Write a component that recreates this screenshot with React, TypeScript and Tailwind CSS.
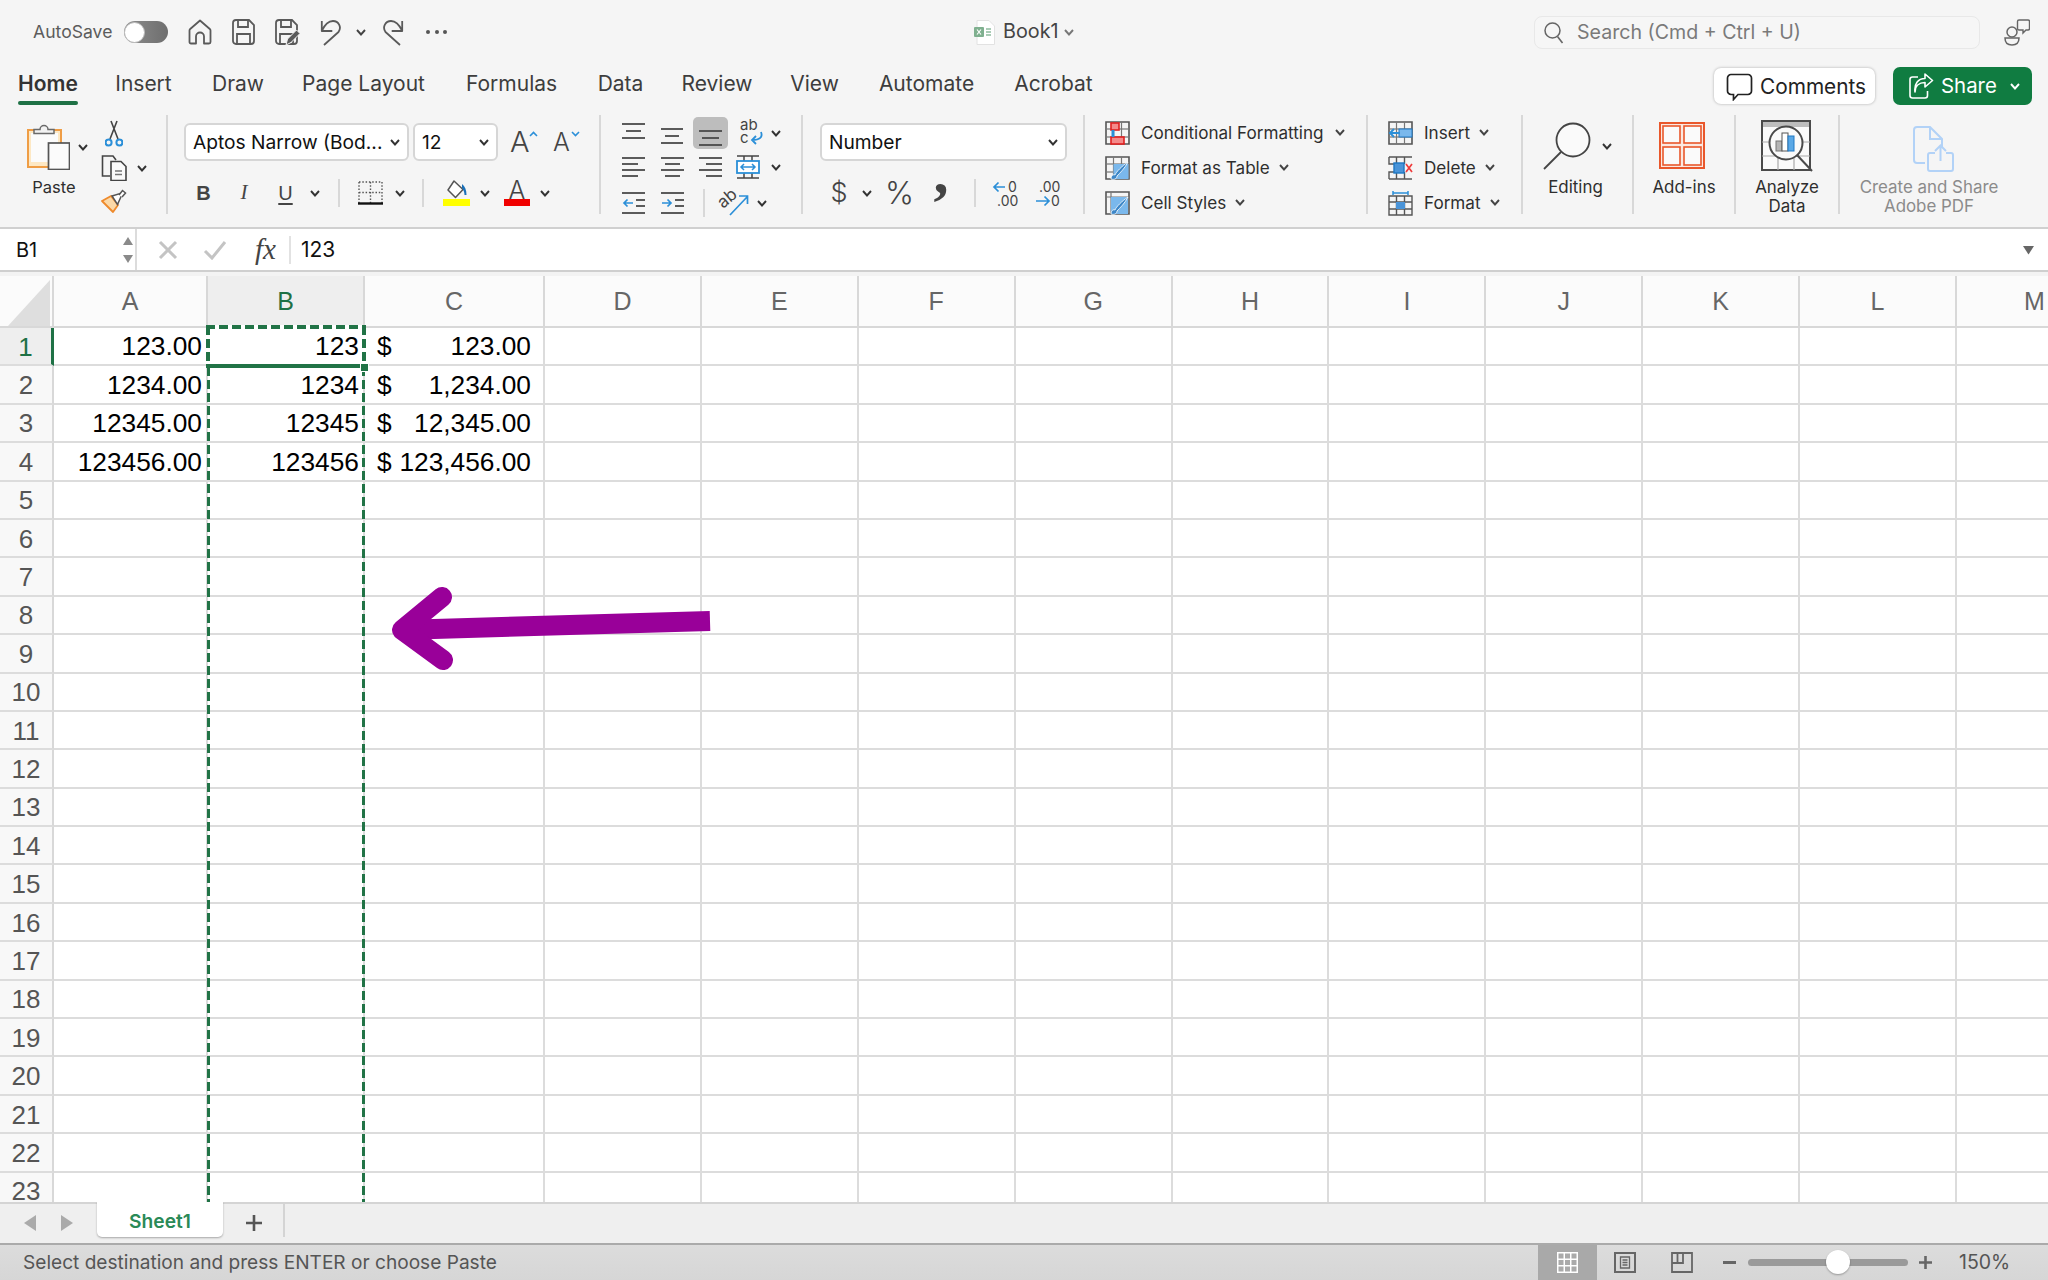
import React from "react";

const D = "#4a4a4a";
const BL = "#2b8fd8";

function Chev({ c = "#444", w = 10 }: { c?: string; w?: number }) {
  return (
    <svg width={w} height={7} viewBox="0 0 10 7" className="shrink-0">
      <path d="M1 1l4 4.5L9 1" fill="none" stroke={c} strokeWidth={1.9} />
    </svg>
  );
}

function Lines({ w = 23, rows, h = 24, extra }: { w?: number; h?: number; rows: [number, number, number][]; extra?: React.ReactNode }) {
  return (
    <svg width={w} height={h} viewBox={`0 0 ${w} ${h}`} className="shrink-0">
      {rows.map((r, i) => (
        <line key={i} x1={r[0]} x2={r[1]} y1={r[2]} y2={r[2]} stroke={D} strokeWidth={1.8} />
      ))}
      {extra}
    </svg>
  );
}

function Home() {
  return (
    <svg width={24} height={26} viewBox="0 0 24 26" className="shrink-0">
      <path d="M3 24.500a1.500 1.500 0 0 1-1.500-1.500V11.500a2 2 0 0 1 .7-1.500L12 1.500 21.800 10a2 2 0 0 1 .7 1.500V23a1.500 1.500 0 0 1-1.500 1.500h-5v-7a4 4 0 0 0-8 0v7z" fill="none" stroke="#5a5a5a" strokeWidth={1.8} strokeLinejoin="round" />
    </svg>
  );
}
function Save({ pen }: { pen?: boolean }) {
  return (
    <svg width={25} height={26} viewBox="0 0 25 26" className="shrink-0">
      <path d="M4 1h13l5 5v16a3 3 0 0 1-3 3H4a3 3 0 0 1-3-3V4a3 3 0 0 1 3-3z" fill="none" stroke="#5a5a5a" strokeWidth={1.8} />
      <path d="M6 1v7h10V1M5 25V15h13v10" fill="none" stroke="#5a5a5a" strokeWidth={1.8} />
      {pen && <path d="M11 26l1.500-6 9-9 3.500 3.500-9 9z" fill="#5a5a5a" stroke="#f5f5f5" strokeWidth={1} />}
    </svg>
  );
}
function Undo({ flip }: { flip?: boolean }) {
  return (
    <svg width={22} height={27} viewBox="0 0 22 27" className={`shrink-0 ${flip ? "-scale-x-100" : ""}`}>
      <path d="M1.800 2v10h10.500M1.800 12C5 5 9 2 13 2c5.500 0 9 6 5.500 11L4 26" fill="none" stroke="#5a5a5a" strokeWidth={1.8} strokeLinejoin="round" />
    </svg>
  );
}
function Scissors() {
  return (
    <svg width={18} height={27} viewBox="0 0 18 27" className="shrink-0">
      <path d="M12 1L5 19M6 1l7 18" stroke="#444" strokeWidth={1.6} fill="none" />
      <circle cx={3.6} cy={22.5} r={3} fill="none" stroke={BL} strokeWidth={2} />
      <circle cx={14.4} cy={22.5} r={3} fill="none" stroke={BL} strokeWidth={2} />
    </svg>
  );
}
function Copy() {
  return (
    <svg width={26} height={26} viewBox="0 0 26 26" className="shrink-0">
      <path d="M9 21H1.500V1H12l3 4" fill="none" stroke="#444" strokeWidth={1.6} />
      <path d="M10 6.500h10l5 5v14H10z" fill="#fafafa" stroke="#444" strokeWidth={1.6} />
      <path d="M14 16h7M14 19.500h7" stroke="#777" strokeWidth={1.4} />
    </svg>
  );
}
function Painter() {
  return (
    <svg width={26} height={24} viewBox="0 0 26 24" className="shrink-0">
      <path d="M1 12l9-5 7 9-5 7z" fill="#fbd9a8" stroke="#ee8a2c" strokeWidth={1.8} strokeLinejoin="round" />
      <path d="M11 7l8-2.500 1.500 2-4 9z" fill="#fff" stroke="#555" strokeWidth={1.5} />
      <path d="M18 6l3.500-4.500 3 2.500L21 8" fill="#fff" stroke="#555" strokeWidth={1.5} />
    </svg>
  );
}
function Paste() {
  return (
    <svg width={43} height={47} viewBox="0 0 43 47" className="shrink-0">
      <rect x={1} y={7} width={33} height={37} fill="#fde8c4" stroke="#ef9d45" strokeWidth={2} />
      <rect x={4} y={10} width={27} height={29} fill="#fbfbfb" />
      <path d="M7 10.500V6.500h6a4 4 0 0 1 8 0h6v4z" fill="#f2f2f2" stroke="#6a6a6a" strokeWidth={1.5} />
      <rect x={21.500} y={20} width={21} height={26.500} fill="#fbfbfb" stroke="#555" strokeWidth={1.7} />
    </svg>
  );
}
function Borders() {
  return (
    <svg width={25} height={24} viewBox="0 0 25 24" className="shrink-0">
      <path d="M1 1h23M1 1v21M24 1v21M12.500 1v21M1 11.500h23" stroke="#555" strokeWidth={1.4} strokeDasharray="1.500 1.800" fill="none" />
      <path d="M0 22.500h25" stroke="#111" strokeWidth={2.4} />
    </svg>
  );
}
function Fill() {
  return (
    <svg width={27} height={26} viewBox="0 0 27 26" className="shrink-0">
      <path d="M11 1l9 8.500-7.500 8L5 10z" fill="#fff" stroke="#555" strokeWidth={1.5} strokeLinejoin="round" />
      <path d="M19 4c3 2.500 4.500 6 4.500 11h-2c0-3-1-5-2.500-7z" fill="#1a70b8" />
      <rect x={0} y={19} width={27} height={7} fill="#ffff00" />
    </svg>
  );
}
function GridBase({ children, v = [8.500, 16.500], hl = [8, 16] }: { children?: React.ReactNode; v?: number[]; hl?: number[] }) {
  return (
    <svg width={25} height={24} viewBox="0 0 25 24" className="shrink-0">
      <path d={`M1 1h23v22H1z`} fill="none" stroke="#555" strokeWidth={1.6} />
      {v.map((x) => <line key={x} x1={x} x2={x} y1={1} y2={23} stroke="#777" strokeWidth={1.2} />)}
      {hl.map((y) => <line key={y} x1={1} x2={24} y1={y} y2={y} stroke="#777" strokeWidth={1.2} />)}
      {children}
    </svg>
  );
}
function Brush() {
  return <path d="M6 23c0-3 2-5 4-4 1-3 7-9 13-13-3 6-8 11-11 14 0 3-3 4-6 3z" fill="#3d87c8" stroke="#fff" strokeWidth={0.8} />;
}

function Label({ children, w, cls = "" }: { children: React.ReactNode; w: string; cls?: string }) {
  return <span className={`${w} ${cls} text-[17.1px] leading-[24px] whitespace-nowrap text-[#2e2e2e]`}>{children}</span>;
}

function TitleBar() {
  return (
    <div className="flex items-center h-[56px] pt-[8px]">
      <span className="ml-[33px] w-[81px] text-[17.6px] whitespace-nowrap text-[#5c5c5c]">AutoSave</span>
      <div className="ml-[10px] w-[44px] h-[22px] rounded-full bg-gradient-to-r from-[#8e8e8e] to-[#6e6e6e] flex items-center shrink-0">
        <div className="w-[21px] h-[21px] rounded-full bg-white border border-[#bbb]" />
      </div>
      <div className="ml-[20px] flex"><Home /></div>
      <div className="ml-[20px] flex"><Save /></div>
      <div className="ml-[18px] flex"><Save pen /></div>
      <div className="ml-[20px] flex"><Undo /></div>
      <div className="ml-[14px] flex"><Chev /></div>
      <div className="ml-[16px] flex"><Undo flip /></div>
      <div className="ml-[22px] w-[21px] flex justify-between">
        <i className="w-[4px] h-[4px] rounded-full bg-[#555]" />
        <i className="w-[4px] h-[4px] rounded-full bg-[#555]" />
        <i className="w-[4px] h-[4px] rounded-full bg-[#555]" />
      </div>
      <svg width={21} height={25} viewBox="0 0 21 25" className="ml-[527px] shrink-0">
        <path d="M3 .5h12l5.500 5.500v18.500H3z" fill="#fff" stroke="#e2e2e2" />
        <rect x={0} y={7} width={10} height={10} rx={1} fill="#7fb08f" />
        <path d="M3 9.500l4 5M7 9.500l-4 5" stroke="#fff" strokeWidth={1.2} />
        <path d="M12 9h5M12 12h5M12 15h5" stroke="#8fbc9f" strokeWidth={1.6} />
      </svg>
      <span className="ml-[8px] w-[55px] text-[19.8px] whitespace-nowrap text-[#444]">Book1</span>
      <div className="ml-[5px] flex"><Chev c="#777" w={12} /></div>
      <div className="ml-[459px] w-[446px] h-[33px] pt-[1px] rounded-[8px] border border-[#e8e8e8] bg-[#f6f6f6] flex items-center shrink-0">
        <svg width={20} height={22} viewBox="0 0 20 22" className="ml-[9px] shrink-0">
          <circle cx={8.500} cy={8.500} r={7.500} fill="none" stroke="#666" strokeWidth={1.5} />
          <path d="M13.500 14.500l5 6.500" stroke="#666" strokeWidth={1.6} />
        </svg>
        <span className="ml-[13px] text-[19.6px] whitespace-nowrap text-[#7a7a7a]">Search (Cmd + Ctrl + U)</span>
      </div>
      <svg width={26} height={27} viewBox="0 0 26 27" className="ml-[24px] shrink-0">
        <circle cx={8} cy={13} r={5} fill="none" stroke="#666" strokeWidth={1.5} />
        <path d="M1 19h14c0 5-3 7-7 7s-7-2-7-7z" fill="none" stroke="#666" strokeWidth={1.5} />
        <path d="M15 1h9a1.500 1.500 0 0 1 1.500 1.500v7a1.500 1.500 0 0 1-1.500 1.500h-2l-3 3v-3h-4a1.500 1.500 0 0 1-1.500-1.500v-7A1.500 1.500 0 0 1 15 1z" fill="#f5f5f5" stroke="#666" strokeWidth={1.4} />
      </svg>
    </div>
  );
}

function Tab({ label, cls, active }: { label: string; cls: string; active?: boolean }) {
  return (
    <div className={`${cls} shrink-0 flex flex-col items-center mt-[14px]`}>
      <span className={`text-[21px] leading-[28px] whitespace-nowrap ${active ? "font-semibold text-[#333]" : "text-[#3d3d3d]"}`}>{label}</span>
      {active && <div className="mt-[3px] h-[4px] w-full rounded-full bg-[#1e7145]" />}
    </div>
  );
}

function Tabs() {
  return (
    <div className="flex h-[49px]">
      <Tab label="Home" cls="ml-[18px] w-[60px]" active />
      <Tab label="Insert" cls="ml-[37px] w-[57px]" />
      <Tab label="Draw" cls="ml-[41px] w-[50px]" />
      <Tab label="Page Layout" cls="ml-[40px] w-[121px]" />
      <Tab label="Formulas" cls="ml-[42px] w-[91px]" />
      <Tab label="Data" cls="ml-[41px] w-[45px]" />
      <Tab label="Review" cls="ml-[39px] w-[70px]" />
      <Tab label="View" cls="ml-[39px] w-[47px]" />
      <Tab label="Automate" cls="ml-[41px] w-[95px]" />
      <Tab label="Acrobat" cls="ml-[41px] w-[77px]" />
      <div className="ml-[622px] mt-[12px] w-[161px] h-[36px] pt-[1px] rounded-[7px] bg-white shadow-[0_0_3px_rgba(0,0,0,0.3)] flex items-center shrink-0">
        <svg width={27} height={28} viewBox="0 0 27 28" className="ml-[12px] shrink-0">
          <path d="M5 1.500h17a3.500 3.500 0 0 1 3.500 3.500v13a3.500 3.500 0 0 1-3.500 3.500H12l-4.500 5v-5H5A3.500 3.500 0 0 1 1.500 18V5A3.500 3.500 0 0 1 5 1.500z" fill="none" stroke="#222" strokeWidth={1.7} />
        </svg>
        <span className="ml-[7px] text-[20.8px] whitespace-nowrap text-[#222]">Comments</span>
      </div>
      <div className="ml-[18px] mt-[11px] w-[139px] h-[38px] pt-[1px] rounded-[7px] bg-[#107c41] flex items-center shrink-0">
        <svg width={26} height={27} viewBox="0 0 26 27" className="ml-[15px] shrink-0">
          <path d="M10 4H4.500A2.500 2.500 0 0 0 2 6.500v16A2.500 2.500 0 0 0 4.500 25H17a2.500 2.500 0 0 0 2.500-2.500V18" fill="none" stroke="#fff" strokeWidth={1.6} />
          <path d="M7 19c0-6 4-9.500 10-9.500V14l7.500-6.500L17 1v4.500C10 5.500 6 11 7 19z" fill="none" stroke="#fff" strokeWidth={1.6} strokeLinejoin="round" />
        </svg>
        <span className="ml-[7px] text-[20.4px] whitespace-nowrap text-white">Share</span>
        <div className="ml-[12px] flex"><Chev c="#fff" w={12} /></div>
      </div>
    </div>
  );
}

function Sep() {
  return <div className="w-[2px] h-[99px] mt-[10px] bg-[#d8d8d8] shrink-0" />;
}
function MiniSep() {
  return <div className="w-[2px] h-[28px] bg-[#d8d8d8] shrink-0" />;
}
function Box({ cls, text }: { cls: string; text: string }) {
  return (
    <div className={`${cls} h-[38px] rounded-[6px] bg-white border-2 border-[#d6d6d6] flex items-center justify-between shrink-0`}>
      <span className="pl-[7px] text-[19.2px] whitespace-nowrap text-[#111]">{text}</span>
      <div className="pr-[7px] flex"><Chev c="#333" /></div>
    </div>
  );
}

function Clipboard() {
  return (
    <div className="w-[166px] flex shrink-0">
      <div className="ml-[27px] mt-[18px] w-[62px] shrink-0 flex flex-col">
        <div className="flex">
          <Paste />
          <div className="ml-[7px] mt-[21px] flex"><Chev c="#333" w={12} /></div>
        </div>
        <span className="w-[54px] mt-[8px] text-center text-[16.5px] leading-[19px] text-[#2e2e2e]">Paste</span>
      </div>
      <div className="ml-[12px] mt-[15px] flex flex-col">
        <div className="ml-[4px] flex"><Scissors /></div>
        <div className="mt-[8px] flex items-center">
          <Copy />
          <div className="ml-[9px] flex"><Chev c="#333" w={12} /></div>
        </div>
        <div className="mt-[8px] flex"><Painter /></div>
      </div>
    </div>
  );
}

function FontGroup() {
  return (
    <div className="w-[431px] shrink-0">
      <div className="flex mt-[18px] items-center">
        <Box cls="ml-[16px] w-[225px]" text="Aptos Narrow (Bod..." />
        <Box cls="ml-[4px] w-[85px]" text="12" />
        <div className="ml-[12px] w-[25px] flex relative shrink-0">
          <span className="text-[29px] leading-[32px] font-light text-[#444]">A</span>
          <svg width={9} height={6} viewBox="0 0 9 6" className="absolute right-[-3px] top-[5px]"><path d="M1 5l3.500-3.500L8 5" fill="none" stroke={BL} strokeWidth={1.6} /></svg>
        </div>
        <div className="ml-[18px] w-[24px] flex relative shrink-0">
          <span className="text-[25px] leading-[32px] font-light text-[#444]">A</span>
          <svg width={9} height={6} viewBox="0 0 9 6" className="absolute right-[-3px] top-[5px]"><path d="M1 1l3.500 3.500L8 1" fill="none" stroke={BL} strokeWidth={1.6} /></svg>
        </div>
      </div>
      <div className="flex mt-[18px] h-[28px] items-center">
        <span className="ml-[22px] w-[27px] text-center text-[20px] font-bold font-['Liberation_Sans'] text-[#444]">B</span>
        <span className="ml-[14px] w-[26px] text-center text-[21px] italic font-['Liberation_Serif'] text-[#444]">I</span>
        <span className="ml-[15px] w-[27px] text-center text-[20px] underline underline-offset-[3px] font-['Liberation_Sans'] text-[#444]">U</span>
        <div className="ml-[11px] flex"><Chev c="#333" /></div>
        <div className="ml-[18px] flex"><MiniSep /></div>
        <div className="ml-[18px] flex"><Borders /></div>
        <div className="ml-[12px] flex"><Chev c="#333" /></div>
        <div className="ml-[17px] flex"><MiniSep /></div>
        <div className="ml-[19px] flex"><Fill /></div>
        <div className="ml-[10px] flex"><Chev c="#333" /></div>
        <div className="ml-[14px] w-[26px] flex flex-col items-center shrink-0">
          <span className="text-[25px] leading-[20px] h-[19px] font-light text-[#444]">A</span>
          <div className="w-[26px] h-[7px] bg-[#f00000]" />
        </div>
        <div className="ml-[10px] flex"><Chev c="#333" /></div>
      </div>
    </div>
  );
}

function AlignGroup() {
  const top: [number, number, number][] = [[0, 23, 3], [4, 19, 10], [0, 23, 17]];
  const mid: [number, number, number][] = [[0, 22, 8], [4, 18, 15], [0, 22, 22]];
  const bot: [number, number, number][] = [[6, 29, 14], [9, 26, 21], [6, 29, 28]];
  const left: [number, number, number][] = [[0, 23, 3], [0, 16, 9], [0, 23, 15], [0, 16, 21]];
  const cent: [number, number, number][] = [[0, 23, 3], [4, 19, 9], [0, 23, 15], [4, 19, 21]];
  const right: [number, number, number][] = [[0, 23, 3], [7, 23, 9], [0, 23, 15], [7, 23, 21]];
  const ind: [number, number, number][] = [[0, 23, 2], [14, 23, 9], [14, 23, 15], [0, 23, 22]];
  return (
    <div className="w-[200px] shrink-0 pt-[12px]">
      <div className="flex h-[32px] items-center">
        <div className="ml-[21px] flex"><Lines w={23} rows={top} /></div>
        <div className="ml-[16px] flex"><Lines w={22} rows={mid} /></div>
        <div className="ml-[10px] w-[35px] h-[32px] rounded-[5px] bg-[#bdbdbd] flex shrink-0">
          <Lines w={35} h={32} rows={bot} />
        </div>
        <svg width={24} height={26} viewBox="0 0 24 26" className="ml-[12px] shrink-0 overflow-visible">
          <text x={0} y={10} fontSize={15} fill="#444">ab</text>
          <text x={0} y={23} fontSize={15} fill="#444">c</text>
          <path d="M21 12c2 5-1 8-9 8m4-4l-4 4 4 4" fill="none" stroke={BL} strokeWidth={1.8} />
        </svg>
        <div className="ml-[7px] flex"><Chev c="#333" /></div>
      </div>
      <div className="flex h-[36px] items-center">
        <div className="ml-[21px] flex"><Lines rows={left} /></div>
        <div className="ml-[16px] flex"><Lines rows={cent} /></div>
        <div className="ml-[15px] flex"><Lines rows={right} /></div>
        <svg width={24} height={24} viewBox="0 0 24 24" className="ml-[14px] shrink-0">
          <path d="M8 1v5M16 1v5M8 18v5M16 18v5M1 1h22M1 23h22" stroke="#444" strokeWidth={1.5} />
          <rect x={1} y={6} width={22} height={12} fill="#fff" stroke={BL} strokeWidth={1.8} />
          <path d="M5 12h14M8 9l-3 3 3 3M16 9l3 3-3 3" fill="none" stroke={BL} strokeWidth={1.5} />
        </svg>
        <div className="ml-[11px] flex"><Chev c="#333" /></div>
      </div>
      <div className="flex h-[36px] items-center">
        <div className="ml-[21px] flex">
          <Lines rows={ind} extra={<path d="M11 12H2m3.500-3.500L2 12l3.500 3.500" fill="none" stroke={BL} strokeWidth={1.7} />} />
        </div>
        <div className="ml-[16px] flex">
          <Lines rows={ind} extra={<path d="M1 12h9M6.500 8.500L10 12l-3.500 3.500" fill="none" stroke={BL} strokeWidth={1.7} />} />
        </div>
        <div className="ml-[19px] flex"><MiniSep /></div>
        <svg width={27} height={25} viewBox="0 0 27 25" className="ml-[17px] shrink-0 overflow-visible">
          <text x={1} y={18} fontSize={17} fill="#444" transform="rotate(-40 1 18)">ab</text>
          <path d="M8 24L25 6M17 5h8.500v8" fill="none" stroke={BL} strokeWidth={1.7} />
        </svg>
        <div className="ml-[8px] flex"><Chev c="#333" /></div>
      </div>
    </div>
  );
}

function NumberGroup() {
  return (
    <div className="w-[280px] shrink-0">
      <div className="flex mt-[18px]">
        <Box cls="ml-[17px] w-[247px]" text="Number" />
      </div>
      <div className="flex mt-[18px] h-[28px] items-center">
        <span className="ml-[25px] w-[22px] text-center text-[27px] font-light text-[#444]">$</span>
        <div className="ml-[12px] flex"><Chev c="#333" /></div>
        <span className="ml-[13px] w-[27px] text-center text-[31px] font-light text-[#444] whitespace-nowrap">%</span>
        <span className="ml-[23px] w-[12px] h-[20px] self-start -mt-[16px] flex justify-center text-[60px] leading-[20px] font-bold font-['Liberation_Serif'] text-[#444]">,</span>
        <div className="ml-[27px] flex"><MiniSep /></div>
        <svg width={26} height={27} viewBox="0 0 26 27" className="ml-[17px] shrink-0 overflow-visible">
          <text x={15} y={12} fontSize={14} fill="#444">0</text>
          <text x={4} y={26} fontSize={14} fill="#444">.00</text>
          <path d="M12 7H1M5.500 2.500L1 7l4.500 4.500" fill="none" stroke={BL} strokeWidth={1.7} />
        </svg>
        <svg width={26} height={27} viewBox="0 0 26 27" className="ml-[16px] shrink-0 overflow-visible">
          <text x={4} y={12} fontSize={14} fill="#444">.00</text>
          <text x={16} y={26} fontSize={14} fill="#444">0</text>
          <path d="M1 21h13M9.500 16.500L14 21l-4.500 4.500" fill="none" stroke={BL} strokeWidth={1.7} />
        </svg>
      </div>
    </div>
  );
}

function StylesGroup() {
  return (
    <div className="w-[281px] shrink-0 pt-[10px]">
      <div className="flex h-[35px] items-center">
        <div className="ml-[20px] flex">
          <GridBase>
            <rect x={6} y={2} width={8} height={7} fill="#f48a8a" stroke="#e02020" strokeWidth={1.6} />
            <rect x={6} y={16} width={13} height={7} fill="#f48a8a" stroke="#e02020" strokeWidth={1.6} />
            <rect x={6.500} y={9} width={3} height={7} fill={BL} />
          </GridBase>
        </div>
        <Label w="w-[183px] ml-[11px]">Conditional Formatting</Label>
        <div className="ml-[11px] flex"><Chev /></div>
      </div>
      <div className="flex h-[35px] items-center">
        <div className="ml-[20px] flex">
          <GridBase>
            <rect x={8.500} y={8} width={15} height={15} fill="#7ab8ec" />
            <Brush />
          </GridBase>
        </div>
        <Label w="w-[127px] ml-[11px]">Format as Table</Label>
        <div className="ml-[11px] flex"><Chev /></div>
      </div>
      <div className="flex h-[35px] items-center">
        <div className="ml-[20px] flex">
          <svg width={25} height={24} viewBox="0 0 25 24" className="shrink-0">
            <path d="M1 1h23v22H1z" fill="none" stroke="#555" strokeWidth={1.6} />
            <path d="M1 6h23M6 1v22" stroke="#777" strokeWidth={1.2} />
            <rect x={6} y={6} width={17} height={17} fill="#7ab8ec" />
            <Brush />
          </svg>
        </div>
        <Label w="w-[84px] ml-[11px]">Cell Styles</Label>
        <div className="ml-[10px] flex"><Chev /></div>
      </div>
    </div>
  );
}

function CellsGroup() {
  return (
    <div className="w-[153px] shrink-0 pt-[10px]">
      <div className="flex h-[35px] items-center">
        <div className="ml-[20px] flex">
          <GridBase>
            <rect x={11} y={8} width={13} height={8} fill="#7ab8ec" stroke="#1f78c4" strokeWidth={1} />
            <path d="M12 12H2m4-4l-4 4 4 4" fill="none" stroke={BL} strokeWidth={2} />
          </GridBase>
        </div>
        <Label w="w-[44px] ml-[11px]">Insert</Label>
        <div className="ml-[11px] flex"><Chev /></div>
      </div>
      <div className="flex h-[35px] items-center">
        <div className="ml-[20px] flex">
          <svg width={25} height={24} viewBox="0 0 25 24" className="shrink-0">
            <path d="M1 1h23M1 23h23M1 1v7h5M1 23v-7h5M8.500 1v7M16.500 1v7M8.500 16v7M16.500 16v7" fill="none" stroke="#555" strokeWidth={1.4} />
            <rect x={6} y={7} width={10} height={10} fill="#4a94d8" stroke="#1f78c4" strokeWidth={1.4} />
            <path d="M18 8l6 8M24 8l-6 8" stroke="#ef3b3b" strokeWidth={1.7} />
          </svg>
        </div>
        <Label w="w-[50px] ml-[11px]">Delete</Label>
        <div className="ml-[11px] flex"><Chev /></div>
      </div>
      <div className="flex h-[35px] items-center">
        <div className="ml-[20px] flex">
          <svg width={25} height={26} viewBox="0 0 25 26" className="shrink-0">
            <path d="M5 1v4M20 1v4M5 3h15" stroke={BL} strokeWidth={1.5} fill="none" />
            <path d="M1 6h23v19H1zM1 12h23M1 19h23M8.500 6v19M16.500 6v19" fill="none" stroke="#555" strokeWidth={1.4} />
            <rect x={8} y={12} width={9} height={7} fill="#4a94d8" />
          </svg>
        </div>
        <Label w="w-[56px] ml-[11px]">Format</Label>
        <div className="ml-[10px] flex"><Chev /></div>
      </div>
    </div>
  );
}

function BigLabel({ children, c = "#2e2e2e" }: { children: React.ReactNode; c?: string }) {
  return <div className={`text-center text-[16.9px] leading-[19px] whitespace-nowrap ${c === "#2e2e2e" ? "text-[#2e2e2e]" : "text-[#8b8b8b]"}`}>{children}</div>;
}

function Editing() {
  return (
    <div className="w-[109px] shrink-0">
      <div className="h-[73px] flex pt-[17px]">
        <svg width={48} height={48} viewBox="0 0 48 48" className="ml-[20px] shrink-0">
          <circle cx={30} cy={18} r={16.500} fill="#fafafa" stroke="#444" strokeWidth={1.8} />
          <path d="M18 30L1 47" stroke="#444" strokeWidth={1.8} />
        </svg>
        <div className="ml-[10px] mt-[21px] flex"><Chev c="#333" w={12} /></div>
      </div>
      <div className="-ml-[4px]"><BigLabel>Editing</BigLabel></div>
    </div>
  );
}
function AddIns() {
  return (
    <div className="w-[100px] shrink-0">
      <div className="h-[73px] flex pt-[17px]">
        <svg width={46} height={47} viewBox="0 0 46 47" className="ml-[25px] shrink-0">
          <rect x={1} y={1} width={44} height={45} fill="#fbe8e1" stroke="#e9572b" strokeWidth={2} />
          <rect x={4} y={4} width={17} height={17} fill="#fafafa" stroke="#e9572b" strokeWidth={1.6} />
          <rect x={25} y={4} width={17} height={17} fill="#fafafa" stroke="#e9572b" strokeWidth={1.6} />
          <rect x={4} y={25} width={17} height={18} fill="#fafafa" stroke="#e9572b" strokeWidth={1.6} />
          <rect x={25} y={25} width={17} height={18} fill="#fafafa" stroke="#e9572b" strokeWidth={1.6} />
        </svg>
      </div>
      <BigLabel>Add-ins</BigLabel>
    </div>
  );
}
function Analyze() {
  return (
    <div className="w-[102px] shrink-0">
      <div className="h-[73px] flex justify-center pt-[15px]">
        <svg width={52} height={52} viewBox="0 0 52 52" className="shrink-0">
          <rect x={1} y={1} width={48} height={49} fill="#fafafa" stroke="#4a4a4a" strokeWidth={2} />
          <rect x={2} y={2} width={46} height={5} fill="#bdbdbd" />
          <path d="M1 22h48M1 36h48M17 36v14M33 36v14" stroke="#aaa" strokeWidth={1.2} />
          <circle cx={25} cy={23} r={16.500} fill="#fafafa" stroke="#4a4a4a" strokeWidth={2} />
          <path d="M36 35l15 16" stroke="#4a4a4a" strokeWidth={2} />
          <rect x={15} y={21} width={6} height={10} fill="#b5b5b5" stroke="#777" />
          <rect x={21} y={13} width={6} height={18} fill="#fff" stroke="#555" />
          <rect x={27} y={16} width={6} height={15} fill="#5aa8e6" stroke="#1f78c4" />
        </svg>
      </div>
      <BigLabel>Analyze</BigLabel>
      <BigLabel>Data</BigLabel>
    </div>
  );
}
function Adobe() {
  return (
    <div className="w-[178px] shrink-0">
      <div className="h-[73px] flex pt-[21px]">
        <svg width={42} height={46} viewBox="0 0 42 46" className="ml-[73px] shrink-0">
          <path d="M12 37H4a3 3 0 0 1-3-3V4a3 3 0 0 1 3-3h13l12 12v8" fill="none" stroke="#b2d2f7" strokeWidth={2} />
          <path d="M17 1v12h12" fill="none" stroke="#b2d2f7" strokeWidth={2} />
          <path d="M22 27h-5a2 2 0 0 0-2 2v14a2 2 0 0 0 2 2h21a2 2 0 0 0 2-2V29a2 2 0 0 0-2-2h-5M27.500 35V20M22 25l5.500-5.500L33 25" fill="none" stroke="#b2d2f7" strokeWidth={2} />
        </svg>
      </div>
      <BigLabel c="#8b8b8b">Create and Share</BigLabel>
      <BigLabel c="#8b8b8b">Adobe PDF</BigLabel>
    </div>
  );
}

function Ribbon() {
  return (
    <div className="flex h-[122px]">
      <Clipboard /><Sep />
      <FontGroup /><Sep />
      <AlignGroup /><Sep />
      <NumberGroup /><Sep />
      <StylesGroup /><Sep />
      <CellsGroup /><Sep />
      <Editing /><Sep />
      <AddIns /><Sep />
      <Analyze /><Sep />
      <Adobe />
    </div>
  );
}

function FormulaBar() {
  return (
    <div className="h-[49px] flex flex-col shrink-0">
      <div className="h-[2px] bg-[#d0d0d0]" />
      <div className="h-[41px] flex bg-white">
        <div className="w-[135px] flex items-center shrink-0">
          <span className="ml-[16px] w-[100px] text-[20px] text-[#111]">B1</span>
          <svg width={12} height={28} viewBox="0 0 12 28" className="ml-[6px] shrink-0">
            <path d="M6 1l5 8H1zM6 27l5-8H1z" fill="#8a8a8a" />
          </svg>
        </div>
        <div className="w-[2px] bg-[#dcdcdc] shrink-0" />
        <div className="flex items-center flex-1">
          <svg width={20} height={20} viewBox="0 0 20 20" className="ml-[21px] shrink-0">
            <path d="M2 2l16 16M18 2L2 18" stroke="#c4c4c4" strokeWidth={3} />
          </svg>
          <svg width={24} height={20} viewBox="0 0 24 20" className="ml-[25px] shrink-0">
            <path d="M2 11l7 7L22 2" fill="none" stroke="#c4c4c4" strokeWidth={3} />
          </svg>
          <span className="ml-[28px] w-[24px] text-[29px] italic font-['Liberation_Serif'] text-[#444] whitespace-nowrap">fx</span>
          <div className="ml-[10px] w-[2px] h-[28px] bg-[#e2e2e2] shrink-0" />
          <span className="ml-[10px] text-[21px] text-[#111]">123</span>
          <svg width={13} height={10} viewBox="0 0 13 10" className="ml-auto mr-[13px] shrink-0">
            <path d="M1 1h11L6.500 9.500z" fill="#666" />
          </svg>
        </div>
      </div>
      <div className="h-[2px] bg-[#cfcfcf]" />
      <div className="h-[4px] bg-[#f3f3f3]" />
    </div>
  );
}

const COLS = ["A", "B", "C", "D", "E", "F", "G", "H", "I", "J", "K", "L", "M"];
const DATA: string[][] = [
  ["123.00", "123", "123.00"],
  ["1234.00", "1234", "1,234.00"],
  ["12345.00", "12345", "12,345.00"],
  ["123456.00", "123456", "123,456.00"],
];

function Sheet() {
  const rows = Array.from({ length: 23 }, (_, i) => i);
  return (
    <div className="relative flex-1 overflow-hidden bg-white">
      <div className="grid grid-cols-[54px_154px_157px_180px_repeat(10,156.9px)] grid-rows-[52px_repeat(23,38.4px)] font-['Liberation_Sans']">
        <div className="bg-[#fbfbfb] border-r-2 border-b-2 border-[#d8d8d8] flex items-end justify-end">
          <svg width={44} height={46} viewBox="0 0 44 46"><path d="M0 46L42 0v46z" fill="#dedede" /></svg>
        </div>
        {COLS.map((c, i) => (
          <div
            key={c}
            className={`border-r-2 border-b-2 border-[#d8d8d8] flex items-center justify-center pt-[1px] text-[25px] ${i === 1 ? "bg-[#eeeeee] text-[#1e7145]" : "bg-[#fbfbfb] text-[#666]"}`}
          >
            {c}
          </div>
        ))}
        {rows.map((r) => (
          <React.Fragment key={r}>
            <div
              className={`border-b-2 border-[#dcdcdc] flex items-center justify-center pt-[2px] text-[26px] ${r === 0 ? "bg-[#eeeeee] text-[#1e7145] border-r-[3px] border-r-[#1e7145]" : "bg-[#f8f8f8] text-[#555] border-r-2 border-r-[#d8d8d8]"}`}
            >
              {r + 1}
            </div>
            {COLS.map((c, i) => {
              const d = DATA[r];
              return (
                <div key={c} className="border-r-2 border-b-2 border-[#dcdcdc] flex items-center pt-[2px] text-[26.3px] text-black whitespace-nowrap overflow-hidden">
                  {d && i < 2 && <span className="ml-auto pr-[4px]">{d[i]}</span>}
                  {d && i === 2 && (
                    <span className="w-full flex justify-between pl-[12px] pr-[12px]">
                      <span>$</span>
                      <span>{d[2]}</span>
                    </span>
                  )}
                </div>
              );
            })}
          </React.Fragment>
        ))}
      </div>

      <div className="absolute left-[207px] top-[52px] h-full w-[3px] bg-[repeating-linear-gradient(to_bottom,#217346_0,#217346_9px,transparent_9px,transparent_13px)]" />
      <div className="absolute left-[362px] top-[52px] h-full w-[3px] bg-[repeating-linear-gradient(to_bottom,#217346_0,#217346_9px,transparent_9px,transparent_13px)]" />
      <div className="absolute left-[206px] top-[50px] h-[42px] w-[4px] bg-[repeating-linear-gradient(to_bottom,#217346_0,#217346_9px,#ffffff_9px,#ffffff_13px)]" />
      <div className="absolute left-[362px] top-[50px] h-[42px] w-[4px] bg-[repeating-linear-gradient(to_bottom,#217346_0,#217346_9px,#ffffff_9px,#ffffff_13px)]" />
      <div className="absolute left-[206px] top-[49px] h-[4px] w-[160px] bg-[repeating-linear-gradient(to_right,#217346_0,#217346_9px,#ffffff_9px,#ffffff_13px)]" />
      <div className="absolute left-[206px] top-[88px] h-[4px] w-[160px] bg-[#217346]" />
      <div className="absolute left-[360px] top-[87px] h-[9px] w-[9px] bg-[#217346] border border-white" />

      <svg width={340} height={90} viewBox="0 0 340 90" className="absolute left-[385px] top-[309px]">
        <path d="M15 45L325 36" stroke="#990099" strokeWidth={20} fill="none" />
        <path d="M57 12L17 45l41 30" stroke="#990099" strokeWidth={20} fill="none" strokeLinecap="round" strokeLinejoin="round" />
      </svg>
    </div>
  );
}

function Bottom() {
  return (
    <>
      <div className="h-[41px] bg-[#efefef] border-t-2 border-[#d4d4d4] flex shrink-0">
        <svg width={12} height={16} viewBox="0 0 12 16" className="ml-[24px] mt-[11px] shrink-0"><path d="M12 0v16L0 8z" fill="#aaa" /></svg>
        <svg width={12} height={16} viewBox="0 0 12 16" className="ml-[25px] mt-[11px] shrink-0"><path d="M0 0v16l12-8z" fill="#aaa" /></svg>
        <div className="ml-[24px] w-[126px] h-[35px] -mt-[2px] pt-[3px] bg-white rounded-b-[5px] shadow-[0_1px_2px_rgba(0,0,0,0.3)] flex items-center justify-center shrink-0">
          <span className="text-[19.2px] font-semibold text-[#2a8a57]">Sheet1</span>
        </div>
        <svg width={18} height={18} viewBox="0 0 18 18" className="ml-[22px] mt-[10px] shrink-0"><path d="M9 1v16M1 9h16" stroke="#555" strokeWidth={2.6} /></svg>
        <div className="ml-[20px] w-[2px] h-[33px] bg-[#d4d4d4] shrink-0" />
      </div>
      <div className="h-[37px] border-t-2 border-[#aaaaaa] bg-gradient-to-b from-[#dcdcdc] to-[#d6d6d6] flex items-center shrink-0">
        <span className="ml-[23px] text-[19.1px] whitespace-nowrap text-[#555]">Select destination and press ENTER or choose Paste</span>
        <div className="ml-auto w-[59px] h-full bg-[#a9a9a9] flex items-center justify-center shrink-0">
          <svg width={21} height={21} viewBox="0 0 21 21">
            <rect width={21} height={21} fill="#fff" />
            <path d="M1.500 1.500h5v5h-5zM8 1.500h5v5H8zM14.500 1.500h5v5h-5zM1.500 8h5v5h-5zM8 8h5v5H8zM14.500 8h5v5h-5zM1.500 14.500h5v5h-5zM8 14.500h5v5H8zM14.500 14.500h5v5h-5z" fill="#aaa" />
          </svg>
        </div>
        <svg width={22} height={21} viewBox="0 0 22 21" className="ml-[17px] shrink-0">
          <rect x={1} y={1} width={20} height={19} fill="none" stroke="#666" strokeWidth={2} />
          <path d="M6.500 5h9v11h-9zM8.500 8h5M8.500 10.500h5M8.500 13h5" fill="none" stroke="#666" strokeWidth={1.3} />
        </svg>
        <svg width={22} height={21} viewBox="0 0 22 21" className="ml-[35px] shrink-0">
          <path d="M1 1h20v19H1zM1 11h11V1M6.500 1v10" fill="none" stroke="#666" strokeWidth={1.8} />
        </svg>
        <div className="ml-[30px] w-[13px] h-[3px] bg-[#666] shrink-0" />
        <div className="relative ml-[12px] w-[160px] h-[7px] rounded-full bg-[#9a9a9a] shrink-0">
          <div className="absolute left-[78px] top-[-9px] w-[24px] h-[24px] rounded-full bg-white shadow-[0_1px_2px_rgba(0,0,0,0.3)]" />
        </div>
        <svg width={13} height={13} viewBox="0 0 13 13" className="ml-[11px] shrink-0"><path d="M6.500 0v13M0 6.500h13" stroke="#666" strokeWidth={2.6} /></svg>
        <span className="ml-[27px] mr-[39px] w-[50px] text-[19.5px] text-[#555] whitespace-nowrap">150%</span>
      </div>
    </>
  );
}

export default function App() {
  return (
    <div className="w-[2048px] h-[1280px] overflow-hidden flex flex-col bg-[#f5f5f5] font-['Inter',sans-serif]">
      <TitleBar />
      <Tabs />
      <Ribbon />
      <FormulaBar />
      <Sheet />
      <Bottom />
    </div>
  );
}
